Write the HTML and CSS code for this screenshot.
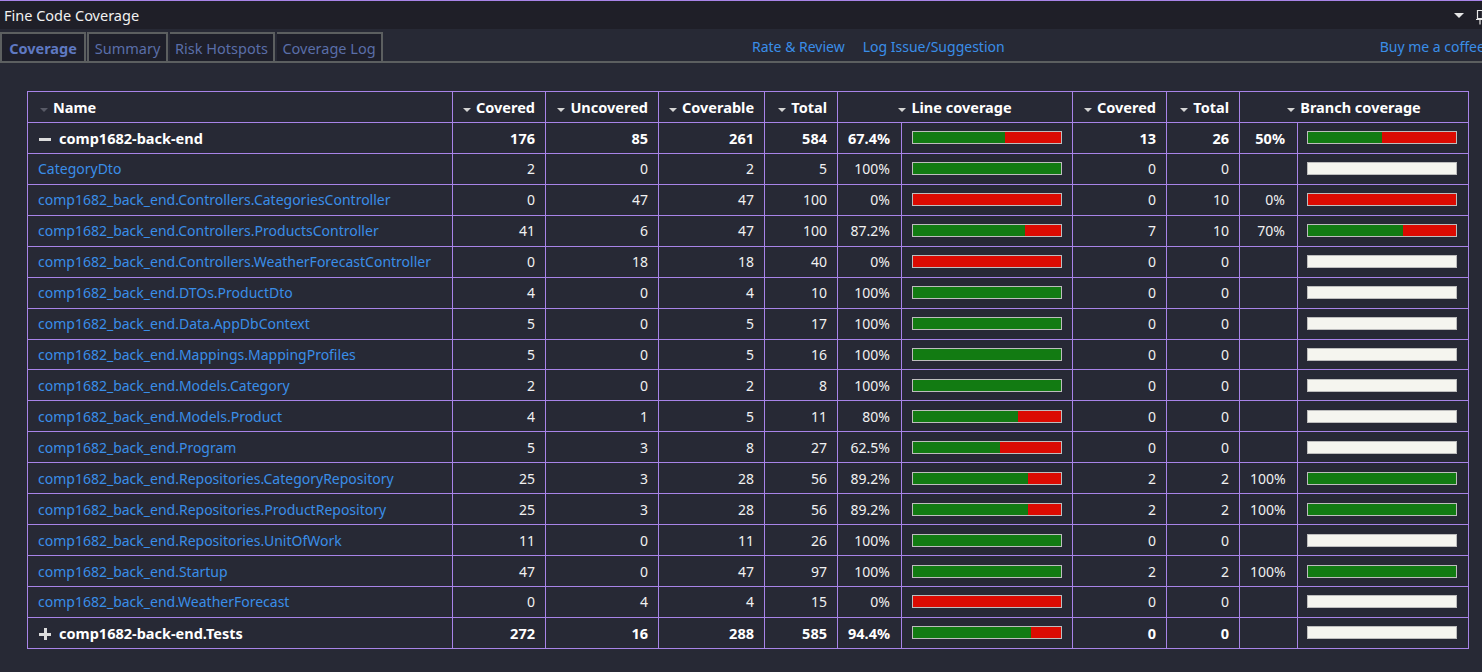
FILE: index.html
```html
<!DOCTYPE html>
<html lang="en">
<head>
<meta charset="utf-8">
<title>Fine Code Coverage</title>
<link rel="stylesheet" href="styles.css">
</head>
<body>
<div class="titlebar">
  <span class="title">Fine Code Coverage</span>
  <span class="tb-icons">
    <svg class="drop" width="10" height="6" viewBox="0 0 10 6"><path d="M0 0H10L5 5Z" fill="#e6e6e6"/></svg>
    <svg class="pin" width="10" height="16" viewBox="0 0 10 16"><path d="M2.5 1.5H7.5V9.5H2.5Z M1 10.5H9 M5 10.5V15.5" fill="none" stroke="#e6e6e6" stroke-width="1.2"/></svg>
  </span>
</div>
<div class="toolbar">
  <div class="tabs">
    <div class="tab active">Coverage</div>
    <div class="tab tab-summary">Summary</div>
    <div class="tab tab-risk">Risk Hotspots</div>
    <div class="tab tab-log">Coverage Log</div>
  </div>
  <div class="links">
    <a class="link" href="#">Rate &amp; Review</a>
    <a class="link" href="#">Log Issue/Suggestion</a>
  </div>
  <a class="link coffee" href="#">Buy me a coffee</a>
</div>
<div class="content">
<table class="grid">
  <colgroup>
    <col class="c-name"><col class="c-cov"><col class="c-uncov"><col class="c-coverable"><col class="c-total">
    <col class="c-pct"><col class="c-bar"><col class="c-bcov"><col class="c-btotal"><col class="c-bpct"><col class="c-bar">
  </colgroup>
  <thead>
    <tr>
      <th class="left"><span class="sort dim"></span>Name</th>
      <th class="num"><span class="sort"></span>Covered</th>
      <th class="num"><span class="sort"></span>Uncovered</th>
      <th class="num"><span class="sort"></span>Coverable</th>
      <th class="num"><span class="sort"></span>Total</th>
      <th class="center" colspan="2"><span class="sort"></span>Line coverage</th>
      <th class="num"><span class="sort"></span>Covered</th>
      <th class="num"><span class="sort"></span>Total</th>
      <th class="center" colspan="2"><span class="sort"></span>Branch coverage</th>
    </tr>
  </thead>
  <tbody>
    <tr class="asm">
      <td class="name"><span class="exp minus"></span>comp1682-back-end</td>
      <td class="num">176</td><td class="num">85</td><td class="num">261</td><td class="num">584</td>
      <td class="pct">67.4%</td>
      <td class="barcell"><div class="bar"><span class="g" style="width:62%"></span><span class="r"></span></div></td>
      <td class="num">13</td><td class="num">26</td><td class="bpct">50%</td>
      <td class="barcell b"><div class="bar"><span class="g" style="width:50%"></span><span class="r"></span></div></td>
    </tr>
    <tr>
      <td class="name cls">CategoryDto</td>
      <td class="num">2</td><td class="num">0</td><td class="num">2</td><td class="num">5</td>
      <td class="pct">100%</td>
      <td class="barcell"><div class="bar"><span class="g" style="width:100%"></span></div></td>
      <td class="num">0</td><td class="num">0</td><td class="bpct"></td>
      <td class="barcell b"><div class="bar empty"></div></td>
    </tr>
    <tr>
      <td class="name cls">comp1682_back_end.Controllers.CategoriesController</td>
      <td class="num">0</td><td class="num">47</td><td class="num">47</td><td class="num">100</td>
      <td class="pct">0%</td>
      <td class="barcell"><div class="bar"><span class="r"></span></div></td>
      <td class="num">0</td><td class="num">10</td><td class="bpct">0%</td>
      <td class="barcell b"><div class="bar"><span class="r"></span></div></td>
    </tr>
    <tr>
      <td class="name cls">comp1682_back_end.Controllers.ProductsController</td>
      <td class="num">41</td><td class="num">6</td><td class="num">47</td><td class="num">100</td>
      <td class="pct">87.2%</td>
      <td class="barcell"><div class="bar"><span class="g" style="width:76%"></span><span class="r"></span></div></td>
      <td class="num">7</td><td class="num">10</td><td class="bpct">70%</td>
      <td class="barcell b"><div class="bar"><span class="g" style="width:64%"></span><span class="r"></span></div></td>
    </tr>
    <tr>
      <td class="name cls">comp1682_back_end.Controllers.WeatherForecastController</td>
      <td class="num">0</td><td class="num">18</td><td class="num">18</td><td class="num">40</td>
      <td class="pct">0%</td>
      <td class="barcell"><div class="bar"><span class="r"></span></div></td>
      <td class="num">0</td><td class="num">0</td><td class="bpct"></td>
      <td class="barcell b"><div class="bar empty"></div></td>
    </tr>
    <tr>
      <td class="name cls">comp1682_back_end.DTOs.ProductDto</td>
      <td class="num">4</td><td class="num">0</td><td class="num">4</td><td class="num">10</td>
      <td class="pct">100%</td>
      <td class="barcell"><div class="bar"><span class="g" style="width:100%"></span></div></td>
      <td class="num">0</td><td class="num">0</td><td class="bpct"></td>
      <td class="barcell b"><div class="bar empty"></div></td>
    </tr>
    <tr>
      <td class="name cls">comp1682_back_end.Data.AppDbContext</td>
      <td class="num">5</td><td class="num">0</td><td class="num">5</td><td class="num">17</td>
      <td class="pct">100%</td>
      <td class="barcell"><div class="bar"><span class="g" style="width:100%"></span></div></td>
      <td class="num">0</td><td class="num">0</td><td class="bpct"></td>
      <td class="barcell b"><div class="bar empty"></div></td>
    </tr>
    <tr>
      <td class="name cls">comp1682_back_end.Mappings.MappingProfiles</td>
      <td class="num">5</td><td class="num">0</td><td class="num">5</td><td class="num">16</td>
      <td class="pct">100%</td>
      <td class="barcell"><div class="bar"><span class="g" style="width:100%"></span></div></td>
      <td class="num">0</td><td class="num">0</td><td class="bpct"></td>
      <td class="barcell b"><div class="bar empty"></div></td>
    </tr>
    <tr>
      <td class="name cls">comp1682_back_end.Models.Category</td>
      <td class="num">2</td><td class="num">0</td><td class="num">2</td><td class="num">8</td>
      <td class="pct">100%</td>
      <td class="barcell"><div class="bar"><span class="g" style="width:100%"></span></div></td>
      <td class="num">0</td><td class="num">0</td><td class="bpct"></td>
      <td class="barcell b"><div class="bar empty"></div></td>
    </tr>
    <tr>
      <td class="name cls">comp1682_back_end.Models.Product</td>
      <td class="num">4</td><td class="num">1</td><td class="num">5</td><td class="num">11</td>
      <td class="pct">80%</td>
      <td class="barcell"><div class="bar"><span class="g" style="width:71%"></span><span class="r"></span></div></td>
      <td class="num">0</td><td class="num">0</td><td class="bpct"></td>
      <td class="barcell b"><div class="bar empty"></div></td>
    </tr>
    <tr>
      <td class="name cls">comp1682_back_end.Program</td>
      <td class="num">5</td><td class="num">3</td><td class="num">8</td><td class="num">27</td>
      <td class="pct">62.5%</td>
      <td class="barcell"><div class="bar"><span class="g" style="width:59%"></span><span class="r"></span></div></td>
      <td class="num">0</td><td class="num">0</td><td class="bpct"></td>
      <td class="barcell b"><div class="bar empty"></div></td>
    </tr>
    <tr>
      <td class="name cls">comp1682_back_end.Repositories.CategoryRepository</td>
      <td class="num">25</td><td class="num">3</td><td class="num">28</td><td class="num">56</td>
      <td class="pct">89.2%</td>
      <td class="barcell"><div class="bar"><span class="g" style="width:78%"></span><span class="r"></span></div></td>
      <td class="num">2</td><td class="num">2</td><td class="bpct">100%</td>
      <td class="barcell b"><div class="bar"><span class="g" style="width:100%"></span></div></td>
    </tr>
    <tr>
      <td class="name cls">comp1682_back_end.Repositories.ProductRepository</td>
      <td class="num">25</td><td class="num">3</td><td class="num">28</td><td class="num">56</td>
      <td class="pct">89.2%</td>
      <td class="barcell"><div class="bar"><span class="g" style="width:78%"></span><span class="r"></span></div></td>
      <td class="num">2</td><td class="num">2</td><td class="bpct">100%</td>
      <td class="barcell b"><div class="bar"><span class="g" style="width:100%"></span></div></td>
    </tr>
    <tr>
      <td class="name cls">comp1682_back_end.Repositories.UnitOfWork</td>
      <td class="num">11</td><td class="num">0</td><td class="num">11</td><td class="num">26</td>
      <td class="pct">100%</td>
      <td class="barcell"><div class="bar"><span class="g" style="width:100%"></span></div></td>
      <td class="num">0</td><td class="num">0</td><td class="bpct"></td>
      <td class="barcell b"><div class="bar empty"></div></td>
    </tr>
    <tr>
      <td class="name cls">comp1682_back_end.Startup</td>
      <td class="num">47</td><td class="num">0</td><td class="num">47</td><td class="num">97</td>
      <td class="pct">100%</td>
      <td class="barcell"><div class="bar"><span class="g" style="width:100%"></span></div></td>
      <td class="num">2</td><td class="num">2</td><td class="bpct">100%</td>
      <td class="barcell b"><div class="bar"><span class="g" style="width:100%"></span></div></td>
    </tr>
    <tr>
      <td class="name cls">comp1682_back_end.WeatherForecast</td>
      <td class="num">0</td><td class="num">4</td><td class="num">4</td><td class="num">15</td>
      <td class="pct">0%</td>
      <td class="barcell"><div class="bar"><span class="r"></span></div></td>
      <td class="num">0</td><td class="num">0</td><td class="bpct"></td>
      <td class="barcell b"><div class="bar empty"></div></td>
    </tr>
    <tr class="asm">
      <td class="name"><span class="exp plus"></span>comp1682-back-end.Tests</td>
      <td class="num">272</td><td class="num">16</td><td class="num">288</td><td class="num">585</td>
      <td class="pct">94.4%</td>
      <td class="barcell"><div class="bar"><span class="g" style="width:80%"></span><span class="r"></span></div></td>
      <td class="num">0</td><td class="num">0</td><td class="bpct"></td>
      <td class="barcell b"><div class="bar empty"></div></td>
    </tr>
  </tbody>
</table>
</div>
</body>
</html>
```
FILE: styles.css
```css
html, body {
  margin: 0;
  padding: 0;
}
body {
  background: #272935;
  font-family: "Noto Sans", "Open Sans", sans-serif;
  color: #f1f1f1;
  width: 1482px;
  height: 672px;
  overflow: hidden;
}

.titlebar {
  border-top: 1px solid #a884e8;
  height: 28px;
  background: #1f1f28;
  display: flex;
  align-items: center;
  overflow: hidden;
}
.title {
  font-size: 14.5px;
  padding-left: 4px;
  color: #f1f1f1;
}
.tb-icons {
  margin-left: auto;
  display: flex;
  align-items: center;
  gap: 11px;
  width: 28px;
  overflow: hidden;
  flex-shrink: 0;
}
.tb-icons .drop { flex-shrink: 0; margin-top: 1px; }
.tb-icons .pin { flex-shrink: 0; margin-top: 4px; }

.toolbar {
  display: flex;
  align-items: flex-end;
  padding-top: 3px;
  border-bottom: 2px solid #5c5f60;
  box-sizing: content-box;
  height: 29px;
  overflow: hidden;
  white-space: nowrap;
}
.tabs {
  display: flex;
  align-items: flex-end;
  flex-shrink: 0;
}
.tab {
  height: 27px;
  border: 2px solid #5c5f60;
  border-bottom: none;
  background: #1e1f2a;
  color: #5a6ea8;
  font-size: 14.5px;
  display: flex;
  align-items: center;
  justify-content: center;
  box-sizing: content-box;
}
.tab.active {
  width: 82px;
  font-weight: bold;
  color: #5f79c2;
}
.tab-summary { width: 77px; margin-left: 1px; }
.tab-risk { width: 103px; border-left: none; margin-left: 2px; }
.tab-log { width: 104px; border-left: none; margin-left: 2px; }

.links {
  display: flex;
  gap: 18px;
  margin-left: 369px;
  align-self: center;
  flex-shrink: 0;
}
.link {
  color: #3a8ee8;
  text-decoration: none;
  font-size: 14px;
}
.coffee {
  align-self: center;
  margin-left: 375px;
  flex-shrink: 0;
}

.content {
  padding: 28px 0 0 27px;
}

.grid {
  border-collapse: collapse;
  table-layout: fixed;
  width: 1442px;
  font-size: 14px;
}
.grid th, .grid td {
  border: 1px solid #a884e8;
  height: 30.94px;
  padding: 0 10px;
  box-sizing: border-box;
  white-space: nowrap;
  overflow: hidden;
}
.c-name { width: 425px; }
.c-cov { width: 93px; }
.c-uncov { width: 113px; }
.c-coverable { width: 106px; }
.c-total { width: 73px; }
.c-pct { width: 64px; }
.c-bar { width: 171px; }
.c-bcov { width: 94px; }
.c-btotal { width: 73px; }
.c-bpct { width: 58px; }

.grid th {
  font-weight: bold;
  color: #ffffff;
  font-size: 14.5px;
}
.grid th.left { text-align: left; padding-left: 12px; }
.grid th.num { text-align: right; }
.grid th.center { text-align: center; }

.sort {
  display: inline-block;
  width: 0;
  height: 0;
  border-left: 4px solid transparent;
  border-right: 4px solid transparent;
  border-top: 4px solid #d4d4d4;
  margin-right: 5px;
  vertical-align: middle;
  position: relative;
  top: 1px;
}
.sort.dim { border-top-color: #585a66; }

.grid td.num { text-align: right; }
.grid td.pct { text-align: right; padding-right: 11px; }
.grid td.bpct { text-align: right; padding-right: 12px; }
.grid td.name { padding-left: 10px; }
.grid td.cls { color: #3a8ee8; }

.asm td { font-weight: bold; color: #ffffff; font-size: 14.5px; }
.exp {
  display: inline-block;
  width: 12px;
  height: 12px;
  margin: 0 8px 0 1px;
  vertical-align: middle;
  position: relative;
  top: -1px;
}
.exp.minus::before,
.exp.plus::before,
.exp.plus::after {
  content: "";
  position: absolute;
  background: #dcdcdc;
}
.exp.minus::before,
.exp.plus::before {
  left: 0;
  right: 0;
  top: 5px;
  height: 3px;
}
.exp.plus::after {
  top: 0;
  bottom: 0;
  left: 4.5px;
  width: 3px;
}

.grid td.barcell { padding: 0 0 0 10px; }
.grid td.barcell.b { padding-left: 9px; }
.bar {
  width: 150px;
  height: 13px;
  border: 1px solid #bdbdbd;
  box-sizing: border-box;
  display: flex;
}
.bar .g { background: #127b12; height: 100%; }
.bar .r { background: #db0b02; height: 100%; flex: 1; }
.bar.empty { background: #f5f5ef; }
```
